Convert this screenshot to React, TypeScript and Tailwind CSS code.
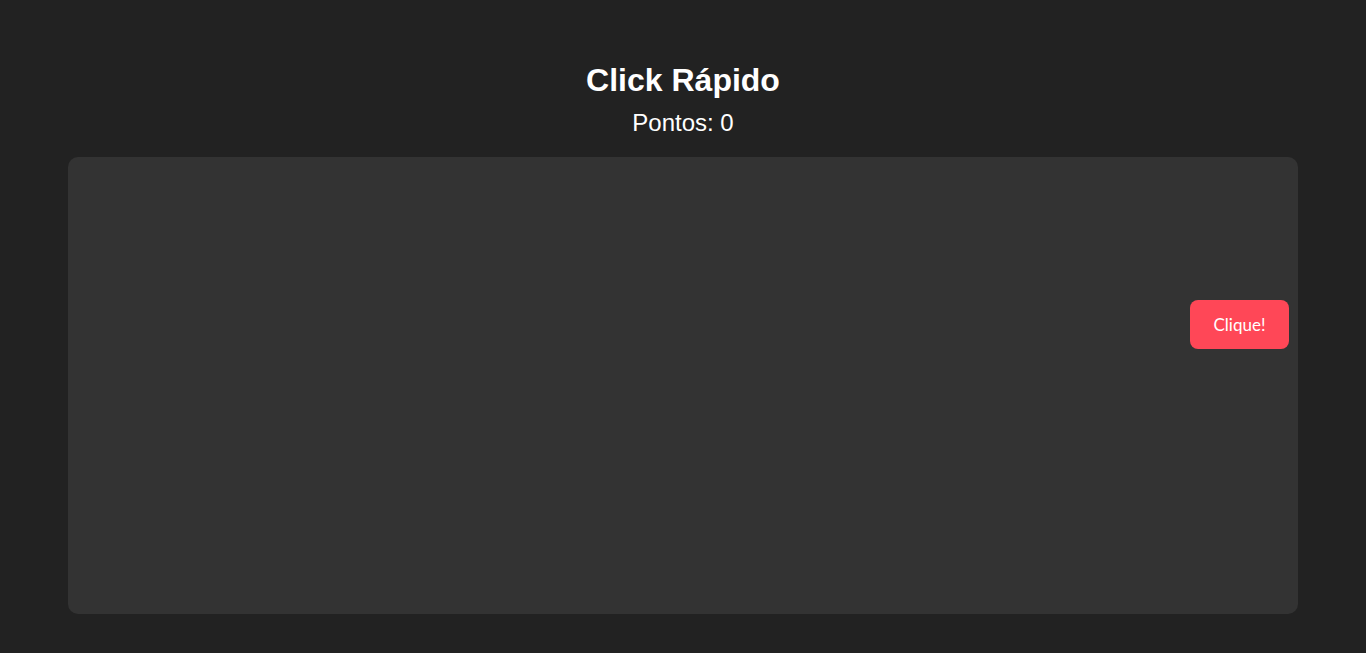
import React, { useState } from 'react';

export default function App() {
  const [score, setScore] = useState(0);

  return (
    <div className="min-h-[653px] w-full bg-[#222222] text-white font-['Liberation_Sans',Arial,sans-serif] flex flex-col items-center pt-[62px] pb-[39px]">
      <h1 className="text-[32px] font-bold leading-[36px]">Click Rápido</h1>
      <p className="mt-[11px] text-[24px] leading-[27px]">Pontos: {score}</p>
      <div className="relative mt-[21px] w-[1230px] h-[457px] bg-[#333333] rounded-[10px]">
        {/* botão fica numa posição livre dentro da área do jogo */}
        <button
          onClick={() => setScore(score + 1)}
          className="absolute left-[1122px] top-[143px] w-[99px] h-[49px] bg-[#ff4757] rounded-[8px] text-white text-[17px] font-['Lato',sans-serif] flex items-center justify-center cursor-pointer"
        >
          Clique!
        </button>
      </div>
    </div>
  );
}
